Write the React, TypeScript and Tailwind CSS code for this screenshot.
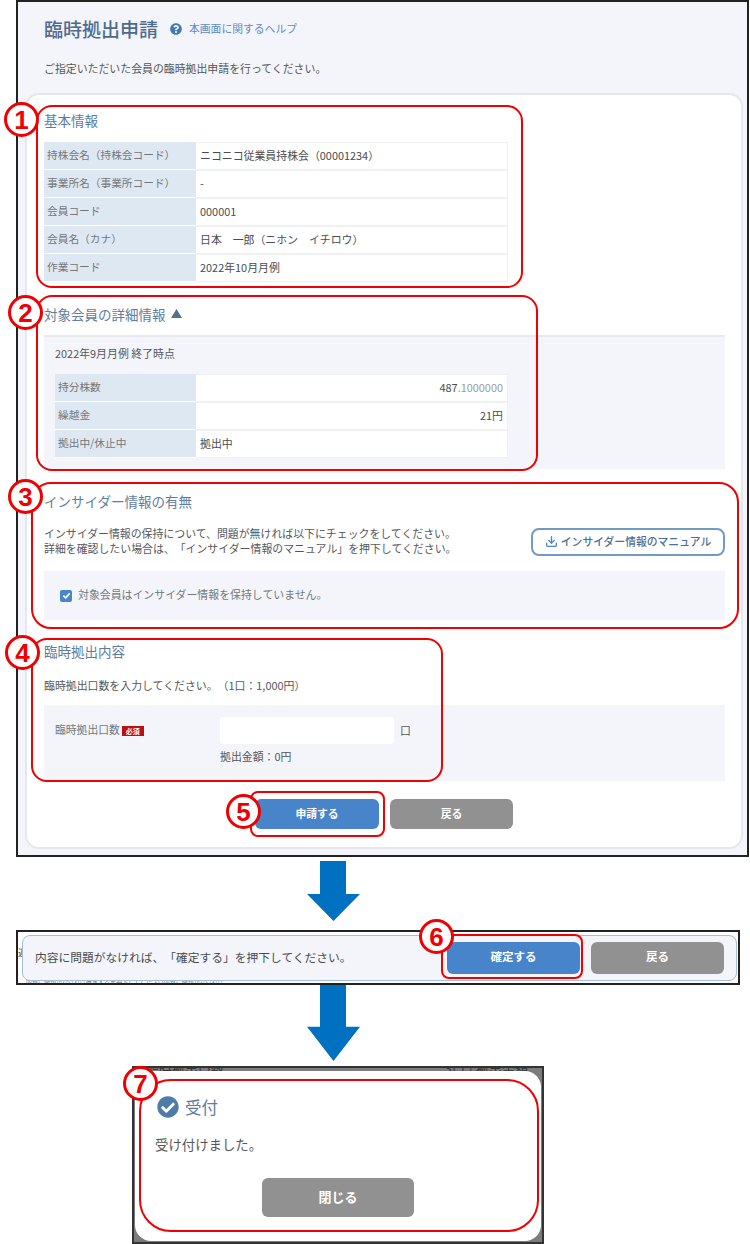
import { Download } from "lucide-react";
import { FaCheckCircle, FaQuestionCircle } from "react-icons/fa";

const basicRows = [
  ["持株会名（持株会コード）", "ニコニコ従業員持株会（00001234）"],
  ["事業所名（事業所コード）", "-"],
  ["会員コード", "000001"],
  ["会員名（カナ）", "日本　一郎（ニホン　イチロウ）"],
  ["作業コード", "2022年10月月例"],
];

const Heading = ({ className, children }: { className: string; children: React.ReactNode }) => (
  <h2 className={`h-5 pb-[1px] flex items-center text-[13.5px] leading-5 font-normal text-[#5f7c9c] ${className}`}>{children}</h2>
);

const Row = ({ label, labelWidth, children }: { label: string; labelWidth: string; children: React.ReactNode }) => (
  <div className="flex h-7 bg-white">
    <div className={`${labelWidth} shrink-0 flex items-center pl-[3px] pb-[1px] bg-[#dee8f2] border-b border-white text-[10.7px] text-[#73777b]`}>{label}</div>
    <div className="flex-1 flex items-center px-1 pb-[1px] border-b border-r border-[#f0f1f3] shadow-[inset_0_1px_0_#f0f1f3] text-[#4a4c50]">{children}</div>
  </div>
);

const Gray = ({ className, children }: { className: string; children: React.ReactNode }) => (
  <button className={`pb-[2px] rounded-md bg-[#919191] text-white font-bold ${className}`}>{children}</button>
);

const Blue = ({ className, children }: { className: string; children: React.ReactNode }) => (
  <button className={`pb-[2px] rounded-md bg-[#4784c9] text-white font-bold ${className}`}>{children}</button>
);

const Mark = ({ className, n }: { className: string; n: number }) => (
  <div className={`absolute w-[35px] h-[35px] rounded-full bg-white border-[3px] border-[#f00000] flex items-center justify-center font-['Liberation_Sans',sans-serif] font-bold text-[26px] leading-none text-[#f00000] ${className}`}>
    {n}
  </div>
);

const Frame = ({ className }: { className: string }) => (
  <div className={`absolute border-2 border-[#f00000] pointer-events-none ${className}`} />
);

const Arrow = ({ className }: { className: string }) => (
  <svg className={`block ml-[307px] w-[53px] ${className}`} viewBox="0 0 53 60" preserveAspectRatio="none">
    <polygon points="13,0 39,0 39,33 53,33 26.5,60 0,33 13,33" fill="#0070c0" />
  </svg>
);

export default function App() {
  return (
    <div className="relative w-[750px] h-[1244px] overflow-hidden bg-white font-['Noto_Sans_CJK_JP',sans-serif] [text-spacing-trim:space-all] text-[10.9px] text-[#55575b]">
      <div className="ml-4 w-[733px] h-[857px] border-2 border-[#222] bg-[#f4f5fa]">
        <div className="pl-[26px] pt-[13px] flex items-center h-10">
          <h1 className="text-[19px] leading-[26px] font-medium text-[#4e6b8f]">臨時拠出申請</h1>
          <FaQuestionCircle className="ml-[12px] w-3 h-3 text-[#3f78b5]" />
          <span className="ml-[7px] text-[10.8px] text-[#5b8cc4]">本画面に関するヘルプ</span>
        </div>
        <p className="ml-[26px] mt-[18px] mb-[19px] leading-4">ご指定いただいた会員の臨時拠出申請を行ってください。</p>

        <div className="ml-[9px] w-[714px] h-[752px] pl-[17px] pt-[15px] rounded-xl bg-white shadow-[0_0_0_2px_#e6e7ee]">
          <Heading className="">基本情報</Heading>
          <div className="mt-3 w-[464px]">
            {basicRows.map(([label, value]) => (
              <Row key={label} label={label} labelWidth="w-[152px]">{value}</Row>
            ))}
          </div>

          <Heading className="mt-[22px]">
            対象会員の詳細情報
            <svg className="ml-[5px] w-[11px] h-[9px]" viewBox="0 0 11 9">
              <polygon points="5.5,0 11,9 0,9" fill="#4f7097" />
            </svg>
          </Heading>
          <div className="mt-[11px] w-[681px] h-[134px] pl-[11px] pt-2 border-t-2 border-[#e8e9ee] bg-[#f4f5fa]">
            <p className="leading-4 mb-[13px]">2022年9月月例 終了時点</p>
            <div className="w-[453px]">
              <Row label="持分株数" labelWidth="w-[141px]">
                <span className="ml-auto">487<span className="text-[#9a9ca0]">.1000000</span></span>
              </Row>
              <Row label="繰越金" labelWidth="w-[141px]">
                <span className="ml-auto">21円</span>
              </Row>
              <Row label="拠出中/休止中" labelWidth="w-[141px]">拠出中</Row>
            </div>
          </div>

          <Heading className="mt-[22px]">インサイダー情報の有無</Heading>
          <div className="mt-[17px] w-[681px] h-7 flex items-center justify-between">
            <p className="pb-[2px] leading-[15px]">
              インサイダー情報の保持について、問題が無ければ以下にチェックをしてください。
              <br />
              詳細を確認したい場合は、「インサイダー情報のマニュアル」を押下してください。
            </p>
            <button className="w-[194px] h-7 pb-[1px] flex items-center justify-center gap-[3px] rounded-lg border-2 border-[#6f9bc4] bg-white text-[10.8px] font-medium text-[#4f6f92]">
              <Download className="w-[13px] h-[13px] text-[#4a86c8]" strokeWidth={2.5} />
              インサイダー情報のマニュアル
            </button>
          </div>
          <div className="mt-[15px] w-[681px] h-[49px] pl-4 flex items-center gap-[6px] bg-[#f4f5fa]">
            <span className="w-3 h-3 rounded-[2px] bg-[#4a86c8] flex items-center justify-center">
              <svg className="w-[9px] h-[9px]" viewBox="0 0 10 10" fill="none">
                <path d="M1.5 5.2 L4 7.6 L8.5 2.6" stroke="white" strokeWidth="1.8" />
              </svg>
            </span>
            <span className="pb-[2px] text-[#73777b]">対象会員はインサイダー情報を保持していません。</span>
          </div>

          <Heading className="mt-[21px]">臨時拠出内容</Heading>
          <p className="mt-4 mb-3 leading-4">臨時拠出口数を入力してください。（1口：1,000円）</p>
          <div className="w-[681px] h-[76px] pl-[11px] pt-3 flex bg-[#f4f5fa]">
            <div className="w-[165px] h-[27px] pb-[2px] flex items-center text-[10.8px] text-[#73777b]">
              臨時拠出口数
              <span className="ml-[2px] mt-[2px] w-[22px] h-[10px] bg-[#c00d12] text-white text-[7px] leading-[10px] font-bold text-center">必須</span>
            </div>
            <div>
              <div className="flex items-center">
                <input className="w-[174px] h-[27px] rounded-sm bg-white outline-none" />
                <span className="ml-[6px]">口</span>
              </div>
              <p className="mt-1 leading-4">拠出金額：0円</p>
            </div>
          </div>
          <div className="mt-[18px] -ml-[17px] flex justify-center gap-[11px] text-[10.8px]">
            <Blue className="w-[124px] h-[30px]">申請する</Blue>
            <Gray className="w-[123px] h-[30px]">戻る</Gray>
          </div>
        </div>
      </div>

      <Arrow className="mt-1 h-[60px]" />

      <div className="relative ml-4 mt-[9px] w-[724px] h-[55px] border-2 border-[#222] bg-white overflow-hidden">
        <span className="absolute left-0 top-[14px] text-[9px] text-[#555]">逓</span>
        <span className="absolute left-[8px] top-[46px] text-[6px] leading-[8px] text-[#777]">内容に問題がなければ確定するを押下してください内容に問題がなければ</span>
        <div className="relative ml-1 mt-[3px] w-[715px] h-[46px] pl-3 pr-3 flex items-center rounded-lg border border-[#a3bfda] bg-[#f4f5fa]">
          <p className="pb-[2px] text-[11.75px] text-[#4a4c50]">内容に問題がなければ、「確定する」を押下してください。</p>
          <div className="ml-auto flex gap-[11px] text-[11.5px]">
            <Blue className="w-[133px] h-8">確定する</Blue>
            <Gray className="w-[133px] h-8">戻る</Gray>
          </div>
        </div>
      </div>

      <Arrow className="h-[76px]" />

      <div className="relative ml-[132px] mt-[5px] w-[412px] h-[178px] border-2 border-[#333] bg-[#7c7c7c] overflow-hidden">
        <span className="absolute left-3 -top-[9px] text-[13px] text-[#333]">臨時拠出口数</span>
        <span className="absolute right-[14px] -top-[9px] text-[13px] text-[#333]">3口 / 拠出金額</span>
        <div className="relative mx-[1px] mt-[3px] h-[170px] pl-[20px] rounded-2xl bg-white">
          <div className="pt-[25px] flex items-center">
            <FaCheckCircle className="ml-[2px] w-[22px] h-[22px] text-[#4f7ba8]" />
            <h3 className="ml-[6px] text-[16.5px] leading-[22px] font-normal text-[#5f7c9c]">受付</h3>
          </div>
          <p className="mt-4 mb-6 text-[13.4px] leading-5">受け付けました。</p>
          <div className="-ml-[20px] flex justify-center">
            <Gray className="w-[152px] h-[39px] text-[13px]">閉じる</Gray>
          </div>
        </div>
      </div>

      <Frame className="left-[36px] top-[105px] w-[487px] h-[183px] rounded-2xl" />
      <Frame className="left-[36px] top-[295px] w-[502px] h-[176px] rounded-2xl" />
      <Frame className="left-[31px] top-[482px] w-[708px] h-[147px] rounded-[20px]" />
      <Frame className="left-[31px] top-[638px] w-[412px] h-[144px] rounded-2xl" />
      <Frame className="left-[250px] top-[791px] w-[135px] h-[46px] rounded-lg" />
      <Frame className="left-[441px] top-[934px] w-[142px] h-[45px] rounded-lg" />
      <Frame className="left-[139px] top-[1079px] w-[400px] h-[153px] rounded-[32px]" />

      <Mark className="left-[4px] top-[102px]" n={1} />
      <Mark className="left-[8px] top-[295px]" n={2} />
      <Mark className="left-[8px] top-[479px]" n={3} />
      <Mark className="left-[5px] top-[635px]" n={4} />
      <Mark className="left-[226px] top-[794px]" n={5} />
      <Mark className="left-[419px] top-[919px]" n={6} />
      <Mark className="left-[123px] top-[1066px]" n={7} />
    </div>
  );
}
